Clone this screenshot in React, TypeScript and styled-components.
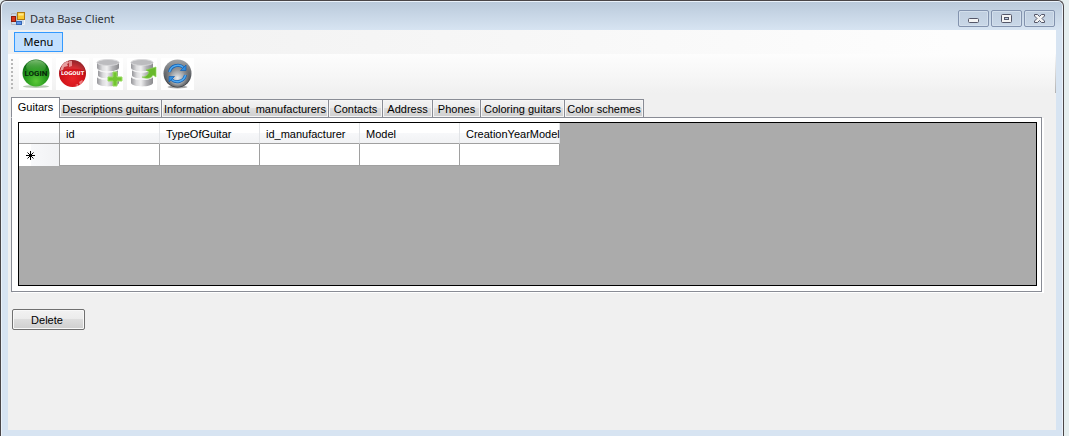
import React, { useState } from 'react';
import styled, { createGlobalStyle } from 'styled-components';

const GlobalStyle = createGlobalStyle`
  * { box-sizing: border-box; }
  body {
    margin: 0;
    background: #e5eeef;
    color: #000;
    font-family: "Liberation Sans", Arial, sans-serif;
    font-size: 11px;
  }
  button { font: inherit; color: inherit; }
`;

const Desktop = styled.div`
  display: flex;
  min-height: 100vh;
  padding-right: 5px;
`;

const Window = styled.main`
  display: flex;
  flex: 1;
  flex-direction: column;
  min-width: 0;
  padding: 0 6px 6px;
  border: 1px solid #4a4648;
  border-bottom: 0;
  border-radius: 6px 6px 0 0;
  background: linear-gradient(#b9c9da, #d7e4f2 29px);
  box-shadow: inset 1px 1px #eaf2fa, inset -1px 0 #eaf2fa;
`;

const TitleBar = styled.header`
  display: flex;
  align-items: center;
  height: 29px;
  padding: 6px 2px 0 4px;
  gap: 5px;
`;

const Title = styled.h1`
  flex: 1;
  margin: 0;
  font: 11px/16px "Noto Sans", "Segoe UI", sans-serif;
  color: #2f3338;
`;

const CaptionButtons = styled.div`
  display: flex;
  gap: 2px;
`;

const CaptionButton = styled.button`
  display: flex;
  align-items: center;
  justify-content: center;
  width: 31px;
  height: 17px;
  padding: 0;
  border: 1px solid #8393ae;
  border-radius: 2px;
  background: linear-gradient(#c0cfe0, #c9d7e7);
  box-shadow: inset 0 0 0 1px #d3dfec;
`;

const Client = styled.div`
  flex: 1;
  margin: 0 1px;
  background: #f0f0f0;
`;

const MenuStrip = styled.nav`
  display: flex;
  align-items: center;
  height: 24px;
  padding: 0 6px;
  background: linear-gradient(90deg, #f0f0f0, #fdfdfd 90%);
`;

const MenuButton = styled.button`
  width: 49px;
  height: 20px;
  padding: 0;
  border: 1px solid #3399ff;
  background: #c2e0ff;
  font: 11px/16px "Noto Sans", "Segoe UI", sans-serif;
`;

const ToolStrip = styled.div`
  display: flex;
  align-items: center;
  height: 39px;
  padding: 0 3px;
  gap: 4px;
  border-right: 1px solid #d0d0d0;
  border-image: linear-gradient(#fdfdfd, #b0b0b0) 1;
  background: linear-gradient(#fdfdfd, #f6f6f6 60%, #f0f0f0);
`;

const Grip = styled.div`
  width: 2px;
  height: 30px;
  margin-right: 2px;
  background: repeating-linear-gradient(#b8b8b8 0 2px, transparent 2px 4px);
`;

const ToolButton = styled.button<{ $width: number }>`
  width: ${(p) => p.$width}px;
  height: 32px;
  padding: 0;
  border: 0;
  background: #fff;
  svg { display: block; }
`;

const Content = styled.div`
  padding: 4px 14px 16px 3px;
`;

const TabList = styled.div`
  display: flex;
  align-items: flex-end;
  height: 21px;
  margin-bottom: -1px;
`;

const Tab = styled.button<{ $width: number; $active: boolean }>`
  position: relative;
  width: ${(p) => p.$width}px;
  height: ${(p) => (p.$active ? 21 : 19)}px;
  margin-left: ${(p) => (p.$active ? 0 : -1)}px;
  padding: 0 0 ${(p) => (p.$active ? 2 : 0)}px;
  border: 1px solid #898c95;
  border-bottom-color: ${(p) => (p.$active ? '#fff' : '#898c95')};
  background: ${(p) => (p.$active ? '#fff' : 'linear-gradient(#f3f3f3, #ebebeb 50%, #dddddd 50%, #cfcfcf)')};
  box-shadow: inset 0 0 0 1px ${(p) => (p.$active ? '#fff' : '#f6f6f6')};
  white-space: pre;
`;

const TabPanel = styled.section`
  padding: 4px 4px 5px 6px;
  border: 1px solid #898c95;
  background: #fff;
  box-shadow: 2px 1px #fff;
`;

const GridView = styled.div`
  min-height: 164px;
  border: 1px solid #000;
  background: #ababab;
  overflow: auto;
`;

const Table = styled.table`
  width: 541px;
  table-layout: fixed;
  border-collapse: separate;
  border-spacing: 0;
`;

const HeaderCell = styled.th<{ $width: number }>`
  width: ${(p) => p.$width}px;
  height: 21px;
  padding: 2px 0 0 6px;
  border-right: 1px solid #e2e4e7;
  border-bottom: 1px solid #a0a0a0;
  background: linear-gradient(#fff 50%, #f7f8fa 50%, #f1f2f4);
  font-weight: normal;
  text-align: left;
  white-space: nowrap;
`;

const CornerCell = styled(HeaderCell)`
  border-right-color: #a0a0a0;
`;

const RowHeader = styled.th`
  height: 22px;
  padding: 0 0 0 7px;
  border-right: 1px solid #a0a0a0;
  background: linear-gradient(90deg, #fff 30%, #f7f8fa 30%, #f1f2f4);
  text-align: left;
  svg { display: block; }
`;

const Cell = styled.td`
  padding: 0;
  border-right: 1px solid #a0a0a0;
  border-bottom: 1px solid #a0a0a0;
  background: #fff;
`;

const CellInput = styled.input`
  display: block;
  width: 100%;
  height: 21px;
  padding: 0 4px;
  border: 0;
  outline: 0;
  background: transparent;
  font: inherit;
`;

const DeleteButton = styled.button`
  display: block;
  width: 73px;
  height: 21px;
  margin: 17px 0 0 1px;
  padding: 0 3px 0 0;
  border: 1px solid #707070;
  border-radius: 2px;
  background: linear-gradient(#f2f2f2, #ebebeb 50%, #dddddd 50%, #cfcfcf);
  box-shadow: inset 0 0 0 1px #f8f8f8;
`;

const AppIcon = () => (
  <svg width="14" height="14" viewBox="0 0 14 14" aria-hidden="true">
    <rect x="0.5" y="4.5" width="4" height="5" fill="#d8341c" stroke="#8e1c0c" />
    <path d="M0.500 3V1.500H5.500V9.500M0.500 10v2.500H5" fill="none" stroke="#b4b8bd" />
    <rect x="6.5" y="0.5" width="7" height="7" fill="#fbc92e" stroke="#b07a10" />
    <rect x="7.5" y="1.5" width="5" height="2" fill="#ffe88a" />
    <rect x="5.5" y="9.5" width="5" height="3" fill="#5b93ea" stroke="#3567b4" />
    <path d="M11 12.500h2.500V8" fill="none" stroke="#f4f4f4" />
  </svg>
);

const MinimizeIcon = () => (
  <svg width="12" height="11" viewBox="0 0 12 11" aria-hidden="true">
    <rect x="0.5" y="5.5" width="10" height="4" rx="1" fill="#f4f4f4" stroke="#545668" />
  </svg>
);

const MaximizeIcon = () => (
  <svg width="12" height="11" viewBox="0 0 12 11" aria-hidden="true">
    <rect x="0.5" y="1.5" width="10" height="8" rx="1" fill="#f4f4f4" stroke="#545668" />
    <rect x="3.5" y="4.5" width="4" height="2" fill="#b9cadd" stroke="#545668" />
  </svg>
);

const CloseIcon = () => (
  <svg width="12" height="11" viewBox="0 0 12 11" aria-hidden="true">
    <path
      d="M.5 1.5h3L5.500 3.500 7.500 1.500h3v1.500L8 5.500l2.500 2.500v1.500h-3L5.500 7.500 3.500 9.500h-3V8L3 5.500.5 3z"
      fill="#f4f4f4"
      stroke="#545668"
    />
  </svg>
);

const LoginIcon = () => (
  <svg width="33" height="32" viewBox="0 0 33 32" aria-hidden="true">
    <defs>
      <radialGradient id="green" cx="50%" cy="80%" r="75%">
        <stop offset="0" stopColor="#5cc838" />
        <stop offset="0.5" stopColor="#289c1e" />
        <stop offset="1" stopColor="#0a6410" />
      </radialGradient>
      <linearGradient id="greenGloss" x2="0" y2="1">
        <stop offset="0" stopColor="#a4dc94" stopOpacity="0.75" />
        <stop offset="1" stopColor="#46b43a" stopOpacity="0.15" />
      </linearGradient>
    </defs>
    <ellipse cx="17" cy="28.500" rx="13" ry="1.500" fill="#b9cab5" />
    <circle cx="17" cy="15" r="13.500" fill="url(#green)" />
    <ellipse cx="17" cy="8.500" rx="10" ry="6.500" fill="url(#greenGloss)" />
    <text x="17" y="18" textAnchor="middle" fontFamily="Roboto, sans-serif" fontWeight="700" fontSize="8" fill="#06260a">LOGIN</text>
  </svg>
);

const LogoutIcon = () => (
  <svg width="33" height="32" viewBox="0 0 33 32" aria-hidden="true">
    <defs>
      <radialGradient id="red" cx="50%" cy="70%" r="65%">
        <stop offset="0" stopColor="#ea2429" />
        <stop offset="0.65" stopColor="#cf1219" />
        <stop offset="1" stopColor="#8d0910" />
      </radialGradient>
    </defs>
    <circle cx="16.500" cy="15.500" r="13.500" fill="url(#red)" />
    <path d="M5 10c1-4 4-6 7-7l1 2-2 1 1 2-4 1-1 3-3 1z" fill="#f6b4b4" opacity="0.8" />
    <path d="M13 3h3v5l-3 1zM23 24l3-2 1 1-3 4zM19 27l3-1v2z" fill="#f8a8a8" opacity="0.7" />
    <path d="M4 13c8-3 18-3 25 0-1-7-6-11-12-11S5 6 4 13z" fill="#fff" opacity="0.12" />
    <text x="16.500" y="17" textAnchor="middle" fontFamily="DejaVu Sans, sans-serif" fontWeight="700" fontSize="5" fill="#fff">LOGOUT</text>
  </svg>
);

const Cylinder = ({ id }: { id: string }) => (
  <>
    <defs>
      <linearGradient id={id}>
        <stop offset="0" stopColor="#96969a" />
        <stop offset="0.25" stopColor="#dcdcde" />
        <stop offset="0.45" stopColor="#f0f0f1" />
        <stop offset="0.7" stopColor="#b4b4b7" />
        <stop offset="1" stopColor="#8a8a8d" />
      </linearGradient>
    </defs>
    <path d="M4 19v6c1 4.500 21 4.500 22 0v-6c-3 4-19 4-22 0z" fill={`url(#${id})`} />
    <path d="M5 11.500v6c1 4 19 4 20 0v-6c-3 4-17 4-20 0z" fill={`url(#${id})`} />
    <path d="M4 4v6c1 4.500 21 4.500 22 0V4z" fill={`url(#${id})`} />
    <path d="M4 18.500c2 4 20 4 22 0M4 11c2 4 20 4 22 0" fill="none" stroke="#f2f2f3" />
    <ellipse cx="15" cy="4.500" rx="11" ry="3" fill="#bcbcbf" stroke="#d8d8da" />
  </>
);

const AddIcon = () => (
  <svg width="30" height="32" viewBox="0 0 30 32" aria-hidden="true">
    <Cylinder id="addMetal" />
    <path d="M20 14h4v5h5v4h-5v5h-4v-5h-5v-4h5z" fill="#72c530" stroke="#98dc60" />
  </svg>
);

const ExportIcon = () => (
  <svg width="30" height="32" viewBox="0 0 30 32" aria-hidden="true">
    <Cylinder id="exportMetal" />
    <path d="M15 19c4 0 6-2 7-5l-3-2 10-3v10l-3-2c-2 4-6 4-11 2z" fill="#68b92b" stroke="#8ed457" strokeWidth="0.7" />
  </svg>
);

const RefreshIcon = () => (
  <svg width="33" height="32" viewBox="0 0 33 32" aria-hidden="true">
    <defs>
      <linearGradient id="steel" x2="0" y2="1">
        <stop offset="0" stopColor="#a4a6a8" />
        <stop offset="0.45" stopColor="#6c6f73" />
        <stop offset="1" stopColor="#2c2f33" />
      </linearGradient>
      <radialGradient id="steelGlow" cy="65%">
        <stop offset="0" stopColor="#eceef0" />
        <stop offset="0.5" stopColor="#b4b7ba" stopOpacity="0.8" />
        <stop offset="1" stopColor="#8c9095" stopOpacity="0" />
      </radialGradient>
    </defs>
    <ellipse cx="16.500" cy="29" rx="10" ry="1.500" fill="#a8a8a8" />
    <circle cx="16.500" cy="15.500" r="14" fill="url(#steel)" />
    <circle cx="16.500" cy="16" r="13" fill="url(#steelGlow)" />
    <g fill="none" stroke="#1260b4" strokeWidth="3">
      <path d="M8.500 14a8.500 8.500 0 0 1 14-4.500" />
      <path d="M24.500 17a8.500 8.500 0 0 1-14 4.500" />
    </g>
    <g fill="none" stroke="#50aaf0" strokeWidth="1.500">
      <path d="M8.500 14a8.500 8.500 0 0 1 14-4.500" />
      <path d="M24.500 17a8.500 8.500 0 0 1-14 4.500" />
    </g>
    <path d="M25 7v5.500h-5.500zM8 24v-5.500h5.500z" fill="#2f8ee0" stroke="#1260b4" strokeWidth="0.7" />
  </svg>
);

const NewRowIcon = () => (
  <svg width="9" height="9" viewBox="0 0 9 9" aria-hidden="true">
    <path d="M4.500 0v9M0 4.500h9M1.500 1.500l6 6M7.500 1.500l-6 6" stroke="#000" />
  </svg>
);

const tools = [
  { name: 'Login', width: 33, Icon: LoginIcon },
  { name: 'Logout', width: 33, Icon: LogoutIcon },
  { name: 'Add record', width: 30, Icon: AddIcon },
  { name: 'Export', width: 30, Icon: ExportIcon },
  { name: 'Refresh', width: 33, Icon: RefreshIcon },
];

const tabs = [
  { label: 'Guitars', width: 49 },
  { label: 'Descriptions guitars', width: 103 },
  { label: 'Information about  manufacturers', width: 168 },
  { label: 'Contacts', width: 55 },
  { label: 'Address', width: 51 },
  { label: 'Phones', width: 49 },
  { label: 'Coloring guitars', width: 85 },
  { label: 'Color schemes', width: 80 },
];

const columns = ['id', 'TypeOfGuitar', 'id_manufacturer', 'Model', 'CreationYearModel'];

export default function App() {
  const [active, setActive] = useState('Guitars');

  return (
    <Desktop>
      <GlobalStyle />
      <Window>
        <TitleBar>
          <AppIcon />
          <Title>Data Base Client</Title>
          <CaptionButtons>
            <CaptionButton aria-label="Minimize"><MinimizeIcon /></CaptionButton>
            <CaptionButton aria-label="Maximize"><MaximizeIcon /></CaptionButton>
            <CaptionButton aria-label="Close"><CloseIcon /></CaptionButton>
          </CaptionButtons>
        </TitleBar>
        <Client>
          <MenuStrip>
            <MenuButton>Menu</MenuButton>
          </MenuStrip>
          <ToolStrip role="toolbar">
            <Grip />
            {tools.map(({ name, width, Icon }) => (
              <ToolButton key={name} $width={width} aria-label={name}>
                <Icon />
              </ToolButton>
            ))}
          </ToolStrip>
          <Content>
            <TabList role="tablist">
              {tabs.map(({ label, width }) => (
                <Tab
                  key={label}
                  role="tab"
                  aria-selected={label === active}
                  $active={label === active}
                  $width={width}
                  onClick={() => setActive(label)}
                >
                  {label}
                </Tab>
              ))}
            </TabList>
            <TabPanel role="tabpanel">
              <GridView>
                <Table>
                  <thead>
                    <tr>
                      <CornerCell $width={41} />
                      {columns.map((name) => (
                        <HeaderCell key={name} $width={100} scope="col">{name}</HeaderCell>
                      ))}
                    </tr>
                  </thead>
                  <tbody>
                    <tr>
                      <RowHeader scope="row" aria-label="New row"><NewRowIcon /></RowHeader>
                      {columns.map((name) => (
                        <Cell key={name}><CellInput aria-label={name} /></Cell>
                      ))}
                    </tr>
                  </tbody>
                </Table>
              </GridView>
            </TabPanel>
            <DeleteButton>Delete</DeleteButton>
          </Content>
        </Client>
      </Window>
    </Desktop>
  );
}
